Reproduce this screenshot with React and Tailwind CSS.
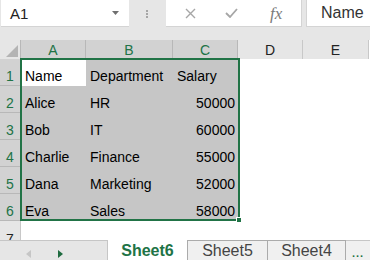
import React from "react";

const rows = [
  ["Name", "Department", "Salary"],
  ["Alice", "HR", 50000],
  ["Bob", "IT", 60000],
  ["Charlie", "Finance", 55000],
  ["Dana", "Marketing", 52000],
  ["Eva", "Sales", 58000],
];

const gridCols = "grid grid-cols-[21px_65px_87px_65px_65px_66px]";

const Toolbar = () => (
  <div className="flex h-[40px] items-start bg-[#e6e6e6]">
    {/* name box */}
    <div className="ml-[1px] flex h-[27px] w-[128px] items-center justify-between border-b border-[#d4d4d4] bg-white pl-[9px] pr-[10px]">
      <span className="text-[15px] leading-none text-[#222]">A1</span>
      <svg width="7" height="4" viewBox="0 0 7 4">
        <polygon points="0,0 7,0 3.5,4" fill="#6f6f6f" />
      </svg>
    </div>
    <div className="flex h-[27px] w-[37px] flex-col items-center justify-center gap-[1px] pr-[1px]">
      <span className="h-[2px] w-[2px] bg-[#a6a6a6]" />
      <span className="h-[2px] w-[2px] bg-[#a6a6a6]" />
      <span className="h-[2px] w-[2px] bg-[#a6a6a6]" />
    </div>
    {/* cancel / enter / fx */}
    <div className="flex h-[27px] w-[136px] items-center border-b border-r border-[#d4d4d4] bg-white">
      <svg className="ml-[19px]" width="11" height="11" viewBox="0 0 11 11">
        <path d="M1 1 L10 10 M10 1 L1 10" stroke="#a6a6a6" strokeWidth="1.4" />
      </svg>
      <svg className="ml-[29px]" width="13" height="10" viewBox="0 0 13 10">
        <path d="M1 5 L5 9 L12 1" stroke="#a6a6a6" strokeWidth="1.8" fill="none" />
      </svg>
      <span className="ml-[32px] font-['Liberation_Serif',serif] text-[17px] italic leading-none text-[#7a7a7a]">
        fx
      </span>
    </div>
    <div className="ml-[4px] flex h-[27px] flex-1 items-center border-b border-l border-[#d4d4d4] bg-white pl-[14px]">
      <span className="text-[16px] leading-none text-[#333]">Name</span>
    </div>
  </div>
);

const ColumnHeader = () => (
  <div className={`${gridCols} h-[19px]`}>
    <div className="relative border-r border-[#b8b8b8] bg-[#e6e6e6]">
      <svg className="absolute left-[6px] top-[5px]" width="12" height="12" viewBox="0 0 12 12">
        <polygon points="12,0 12,12 0,12" fill="#b4b4b4" />
      </svg>
    </div>
    {["A", "B", "C"].map((c) => (
      <div
        key={c}
        className="flex items-center justify-center border-r border-[#b8b8b8] bg-[#d2d2d2] text-[14px] leading-none text-[#217346]"
      >
        {c}
      </div>
    ))}
    {["D", "E"].map((c) => (
      <div
        key={c}
        className="flex items-center justify-center border-r border-[#c8c8c8] bg-[#e6e6e6] text-[14px] leading-none text-[#222]"
      >
        {c}
      </div>
    ))}
  </div>
);

const Row = ({ n, cells }) => (
  <div className={`${gridCols} h-[27px]`}>
    <div className="flex items-end justify-center border-b border-r border-[#b8b8b8] bg-[#d2d2d2] text-[14px] leading-[17px] text-[#217346]">
      {n}
    </div>
    {cells.map((v, i) => {
      const active = n === 1 && i === 0;
      const num = typeof v === "number";
      return (
        <div
          key={i}
          className={`flex items-end pb-[1px] text-[14px] leading-[17px] text-black ${
            active ? "bg-white" : "bg-[#c6c6c6]"
          } ${num ? "justify-end pr-[3px]" : "pl-[4px]"}`}
        >
          {v}
        </div>
      );
    })}
    <div className="bg-white" />
    <div className="bg-white" />
  </div>
);

const Sheet = () => (
  <div className="relative h-[200px] overflow-hidden">
    <ColumnHeader />
    {rows.map((r, i) => (
      <Row key={i} n={i + 1} cells={r} />
    ))}
    <div className={`${gridCols} h-[27px]`}>
      <div className="flex items-end justify-center border-r border-[#c8c8c8] bg-[#e6e6e6] text-[14px] leading-[17px] text-[#222]">
        7
      </div>
    </div>
    {/* selection outline A1:C6 */}
    <div className="pointer-events-none absolute left-[20px] top-[18px] h-[163px] w-[220px] border-2 border-[#217346]" />
    <div className="absolute left-[236px] top-[177px] h-[6px] w-[6px] border border-white bg-[#217346]" />
  </div>
);

const Tabs = () => (
  <div className="flex h-[20px]">
    <div className="flex w-[108px] items-center border-r border-t border-[#c6c6c6] bg-[#e6e6e6]">
      <svg className="ml-[26px] mt-[6px]" width="5" height="8" viewBox="0 0 5 8">
        <polygon points="5,0 5,8 0,4" fill="#c6c6c6" />
      </svg>
      <svg className="ml-[27px] mt-[6px]" width="5" height="8" viewBox="0 0 5 8">
        <polygon points="0,0 5,4 0,8" fill="#1e6b3f" />
      </svg>
    </div>
    <div className="flex w-[79px] justify-center bg-white pt-[2px] text-[16px] font-bold leading-[18px] text-[#217346]">
      Sheet6
    </div>
    <div className="flex w-[80px] justify-center border-l border-t border-[#ababab] bg-[#f0f0f0] pt-[1px] text-[16px] leading-[18px] text-[#444]">
      Sheet5
    </div>
    <div className="flex w-[79px] justify-center border-l border-r border-t border-[#ababab] bg-[#f0f0f0] pt-[1px] text-[16px] leading-[18px] text-[#444]">
      Sheet4
    </div>
    <div className="flex flex-1 items-end justify-center border-t border-[#c6c6c6] bg-[#f0f0f0] pb-[1px]">
      <span className="text-[11px] font-bold leading-none tracking-[1px] text-[#217346]">...</span>
    </div>
  </div>
);

export default function App() {
  return (
    <div className="h-[260px] w-[370px] overflow-hidden bg-white font-['Liberation_Sans',Arial,sans-serif]">
      <Toolbar />
      <Sheet />
      <Tabs />
    </div>
  );
}
